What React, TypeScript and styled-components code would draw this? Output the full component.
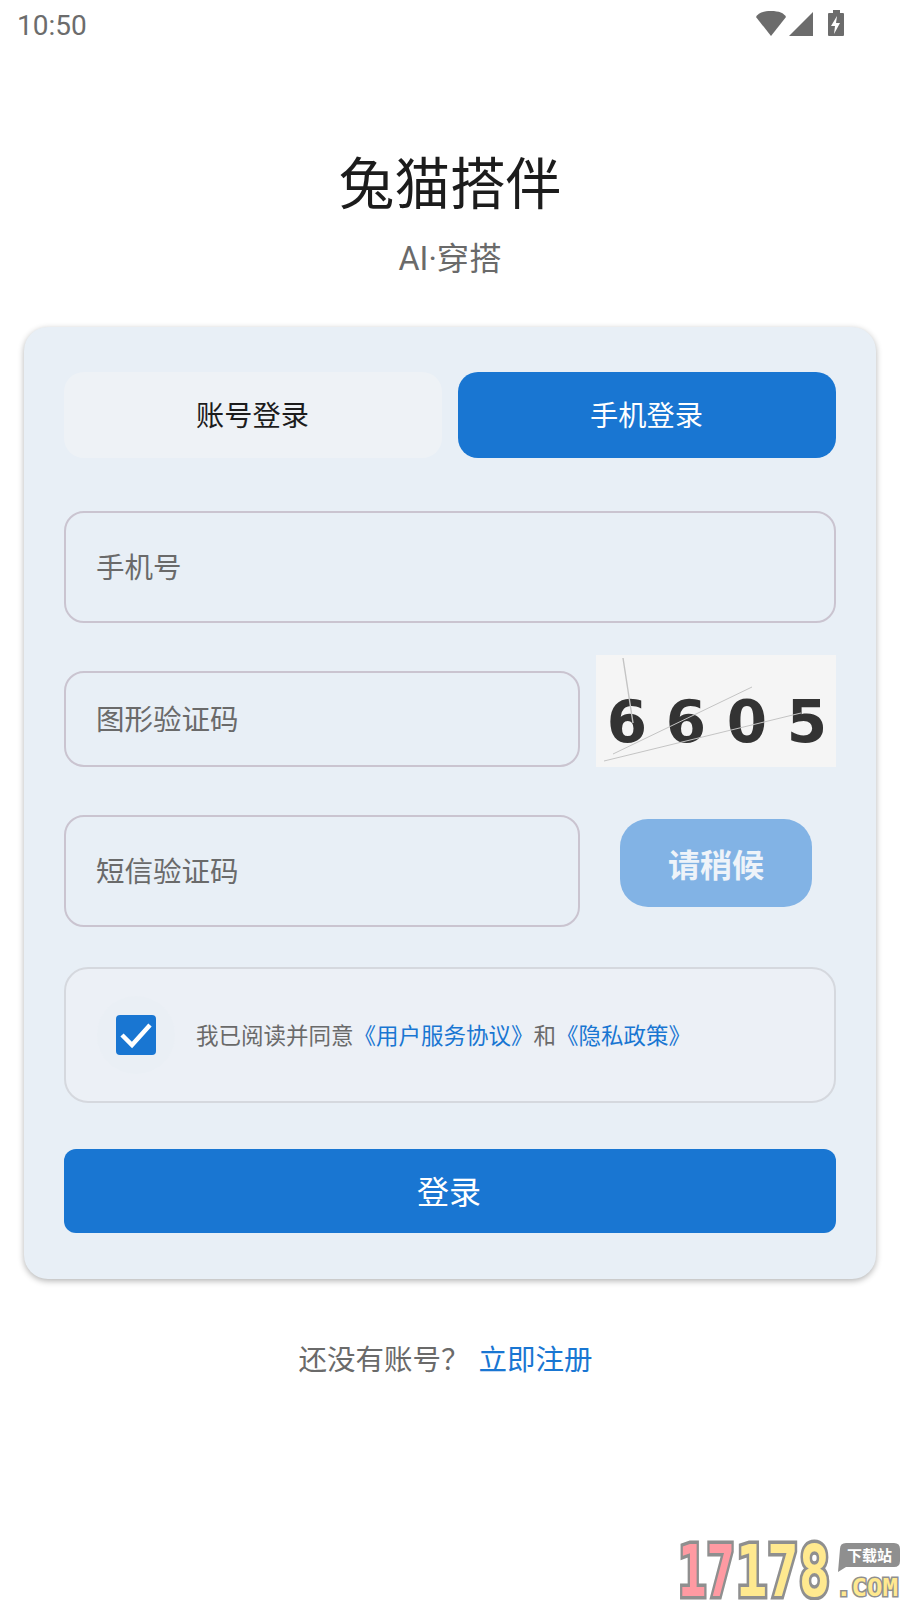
import React from "react";
import styled, { createGlobalStyle } from "styled-components";

const GlobalStyle = createGlobalStyle`
  html, body {
    margin: 0;
    padding: 0;
    background: #fff;
    font-family: Roboto, "Noto Sans CJK SC", sans-serif;
  }
  * {
    box-sizing: border-box;
  }
`;

const Page = styled.div`
  position: relative;
  width: 900px;
  height: 1600px;
  overflow: hidden;
  background: #fff;
  display: flex;
  flex-direction: column;
`;

const StatusBar = styled.div`
  height: 50px;
  padding: 9px 40px 0 17px;
  display: flex;
  justify-content: space-between;
  align-items: flex-start;
`;

const Time = styled.div`
  font-size: 28px;
  line-height: 34px;
  color: #6c6c6c;
`;

const StatusIcons = styled.svg`
  width: 104px;
  height: 34px;
`;

const Title = styled.h1`
  margin: 98px 0 0;
  font-size: 55.6px;
  font-weight: 400;
  line-height: 74px;
  color: #1c1c1c;
  text-align: center;
`;

const Subtitle = styled.div`
  margin-top: 15px;
  font-size: 32.3px;
  line-height: 44px;
  color: #6a6a6a;
  text-align: center;
`;

const Card = styled.div`
  margin: 46px 24px 0;
  padding: 45px 40px 47px;
  height: 952px;
  border-radius: 24px;
  background: #e8eff6;
  box-shadow: 0 2px 6px rgba(0, 0, 0, 0.3);
`;

const Tabs = styled.div`
  display: grid;
  grid-template-columns: 1fr 1fr;
  gap: 16px;
`;

const Tab = styled.div<{ $active?: boolean }>`
  height: 86px;
  padding: 0 1px 4px 0;
  display: flex;
  align-items: center;
  justify-content: center;
  border-radius: 20px;
  font-size: 28.2px;
  background: ${(p) => (p.$active ? "#1976d2" : "#eef2f6")};
  color: ${(p) => (p.$active ? "#fff" : "#1c1c1c")};
`;

const Field = styled.div<{ $height: number }>`
  height: ${(p) => p.$height}px;
  border: 2px solid #cac4d0;
  border-radius: 20px;
  padding: 0 0 4px 30px;
  display: flex;
  align-items: center;
  font-size: 28.5px;
  color: #6a6a6a;
`;

const PhoneRow = styled.div`
  margin-top: 53px;
`;

const CaptchaRow = styled.div`
  margin-top: 32px;
  display: grid;
  grid-template-columns: 516px 240px;
  justify-content: space-between;
  align-items: end;
`;

const CaptchaImage = styled.svg`
  display: block;
  width: 240px;
  height: 112px;
  background: #f5f5f5;
`;

const SmsRow = styled.div`
  margin-top: 48px;
  display: grid;
  grid-template-columns: 516px 192px;
  column-gap: 40px;
  align-items: start;
`;

const WaitButton = styled.div`
  margin-top: 4px;
  height: 88px;
  border-radius: 28px;
  background: #82b3e5;
  color: #eef3f9;
  font-size: 32px;
  font-weight: 700;
  display: flex;
  align-items: center;
  justify-content: center;
`;

const Agreement = styled.div`
  margin-top: 40px;
  height: 136px;
  border: 2px solid #d5d8de;
  border-radius: 24px;
  background: #ecf0f6;
  display: flex;
  align-items: center;
  padding-left: 31px;
  font-size: 22.5px;
  color: #6a6a6a;
`;

const CheckHalo = styled.div`
  width: 78px;
  height: 78px;
  margin-right: 21px;
  border-radius: 50%;
  background: #eaeff5;
  display: flex;
  align-items: center;
  justify-content: center;
  flex: none;
`;

const CheckBox = styled.div`
  width: 40px;
  height: 40px;
  border-radius: 4px;
  background: #1976d2;
  display: flex;
  align-items: center;
  justify-content: center;
`;

const AgreementText = styled.span`
  padding-bottom: 2px;
`;

const Link = styled.span`
  color: #1976d2;
`;

const LoginButton = styled.div`
  margin-top: 46px;
  height: 84px;
  padding: 0 2px 3px 0;
  border-radius: 12px;
  background: #1976d2;
  color: #fff;
  font-size: 32px;
  display: flex;
  align-items: center;
  justify-content: center;
`;

const Footer = styled.div`
  margin-top: 62px;
  padding-right: 9px;
  display: flex;
  justify-content: center;
  gap: 9px;
  font-size: 28.5px;
  line-height: 40px;
  color: #6a6a6a;
`;

const Watermark = styled.svg`
  position: absolute;
  right: 0;
  bottom: 0;
  width: 240px;
  height: 80px;
`;

const captchaDigits = [
  { ch: "6", x: 31 },
  { ch: "6", x: 90 },
  { ch: "0", x: 151 },
  { ch: "5", x: 211 },
];

const App = () => {
  return (
    <Page>
      <GlobalStyle />
      <StatusBar>
        <Time>10:50</Time>
        <StatusIcons viewBox="0 0 104 34">
          <path d="M15 2 C 23 2 28 4 30 8 L15 27 L0 8 C 2 4 7 2 15 2 Z" fill="#6c6c6c" />
          <path d="M57 3 L57 27 L33 27 Z" fill="#6c6c6c" />
          <path
            d="M73 4 H77 V1 H84 V4 H87 Q88 4 88 5 V26 Q88 27 87 27 H73 Q72 27 72 26 V5 Q72 4 73 4 Z"
            fill="#6c6c6c"
          />
          <path d="M81 7 L75 17 H79 L78 25 L84 14 H80 L81 7 Z" fill="#fff" />
        </StatusIcons>
      </StatusBar>

      <Title>兔猫搭伴</Title>
      <Subtitle>AI·穿搭</Subtitle>

      <Card>
        <Tabs>
          <Tab>账号登录</Tab>
          <Tab $active>手机登录</Tab>
        </Tabs>

        <PhoneRow>
          <Field $height={112}>手机号</Field>
        </PhoneRow>

        <CaptchaRow>
          <Field $height={96}>图形验证码</Field>
          <CaptchaImage viewBox="0 0 240 112">
            {captchaDigits.map((d, i) => (
              <text
                key={i}
                x={d.x}
                y="87"
                textAnchor="middle"
                fontFamily="DejaVu Sans"
                fontWeight="700"
                fontSize="58"
                fill="#333"
              >
                {d.ch}
              </text>
            ))}
            <line x1="27" y1="3" x2="37" y2="68" stroke="#c4c4c4" strokeWidth="1.4" />
            <line x1="17" y1="99" x2="156" y2="32" stroke="#c4c4c4" strokeWidth="1" />
            <line x1="8" y1="106" x2="205" y2="58" stroke="#c4c4c4" strokeWidth="1" />
          </CaptchaImage>
        </CaptchaRow>

        <SmsRow>
          <Field $height={112}>短信验证码</Field>
          <WaitButton>请稍候</WaitButton>
        </SmsRow>

        <Agreement>
          <CheckHalo>
            <CheckBox>
              <svg width="40" height="40" viewBox="0 0 40 40">
                <path d="M6 20 L16 30 L34 10" fill="none" stroke="#fff" strokeWidth="4.5" />
              </svg>
            </CheckBox>
          </CheckHalo>
          <AgreementText>
            我已阅读并同意<Link>《用户服务协议》</Link>和<Link>《隐私政策》</Link>
          </AgreementText>
        </Agreement>

        <LoginButton>登录</LoginButton>
      </Card>

      <Footer>
        <span>还没有账号？</span>
        <Link>立即注册</Link>
      </Footer>

      <Watermark viewBox="0 0 240 80">
        <g
          fontFamily="DejaVu Sans Mono"
          fontWeight="700"
          fontSize="72"
          strokeWidth="7"
          stroke="#8f8f8f"
          paintOrder="stroke"
        >
          <text x="18" y="76" textLength="57" lengthAdjust="spacingAndGlyphs" fill="#ff9aa2">
            17
          </text>
          <text x="76" y="76" textLength="94" lengthAdjust="spacingAndGlyphs" fill="#ffe98f">
            178
          </text>
        </g>
        <path d="M186 23 H234 Q240 23 240 29 V41 Q240 47 234 47 H186 L178 52 L180 29 Q180 23 186 23 Z" fill="#8f8f8f" />
        <text x="187" y="41" fontFamily="Noto Sans CJK SC" fontWeight="700" fontSize="15" fill="#fff">
          下载站
        </text>
        <text
          x="176"
          y="76"
          textLength="62"
          lengthAdjust="spacingAndGlyphs"
          fontFamily="DejaVu Sans Mono"
          fontWeight="700"
          fontSize="24"
          stroke="#8f8f8f"
          strokeWidth="3"
          paintOrder="stroke"
          fill="#ffe98f"
        >
          .COM
        </text>
      </Watermark>
    </Page>
  );
};

export default App;
